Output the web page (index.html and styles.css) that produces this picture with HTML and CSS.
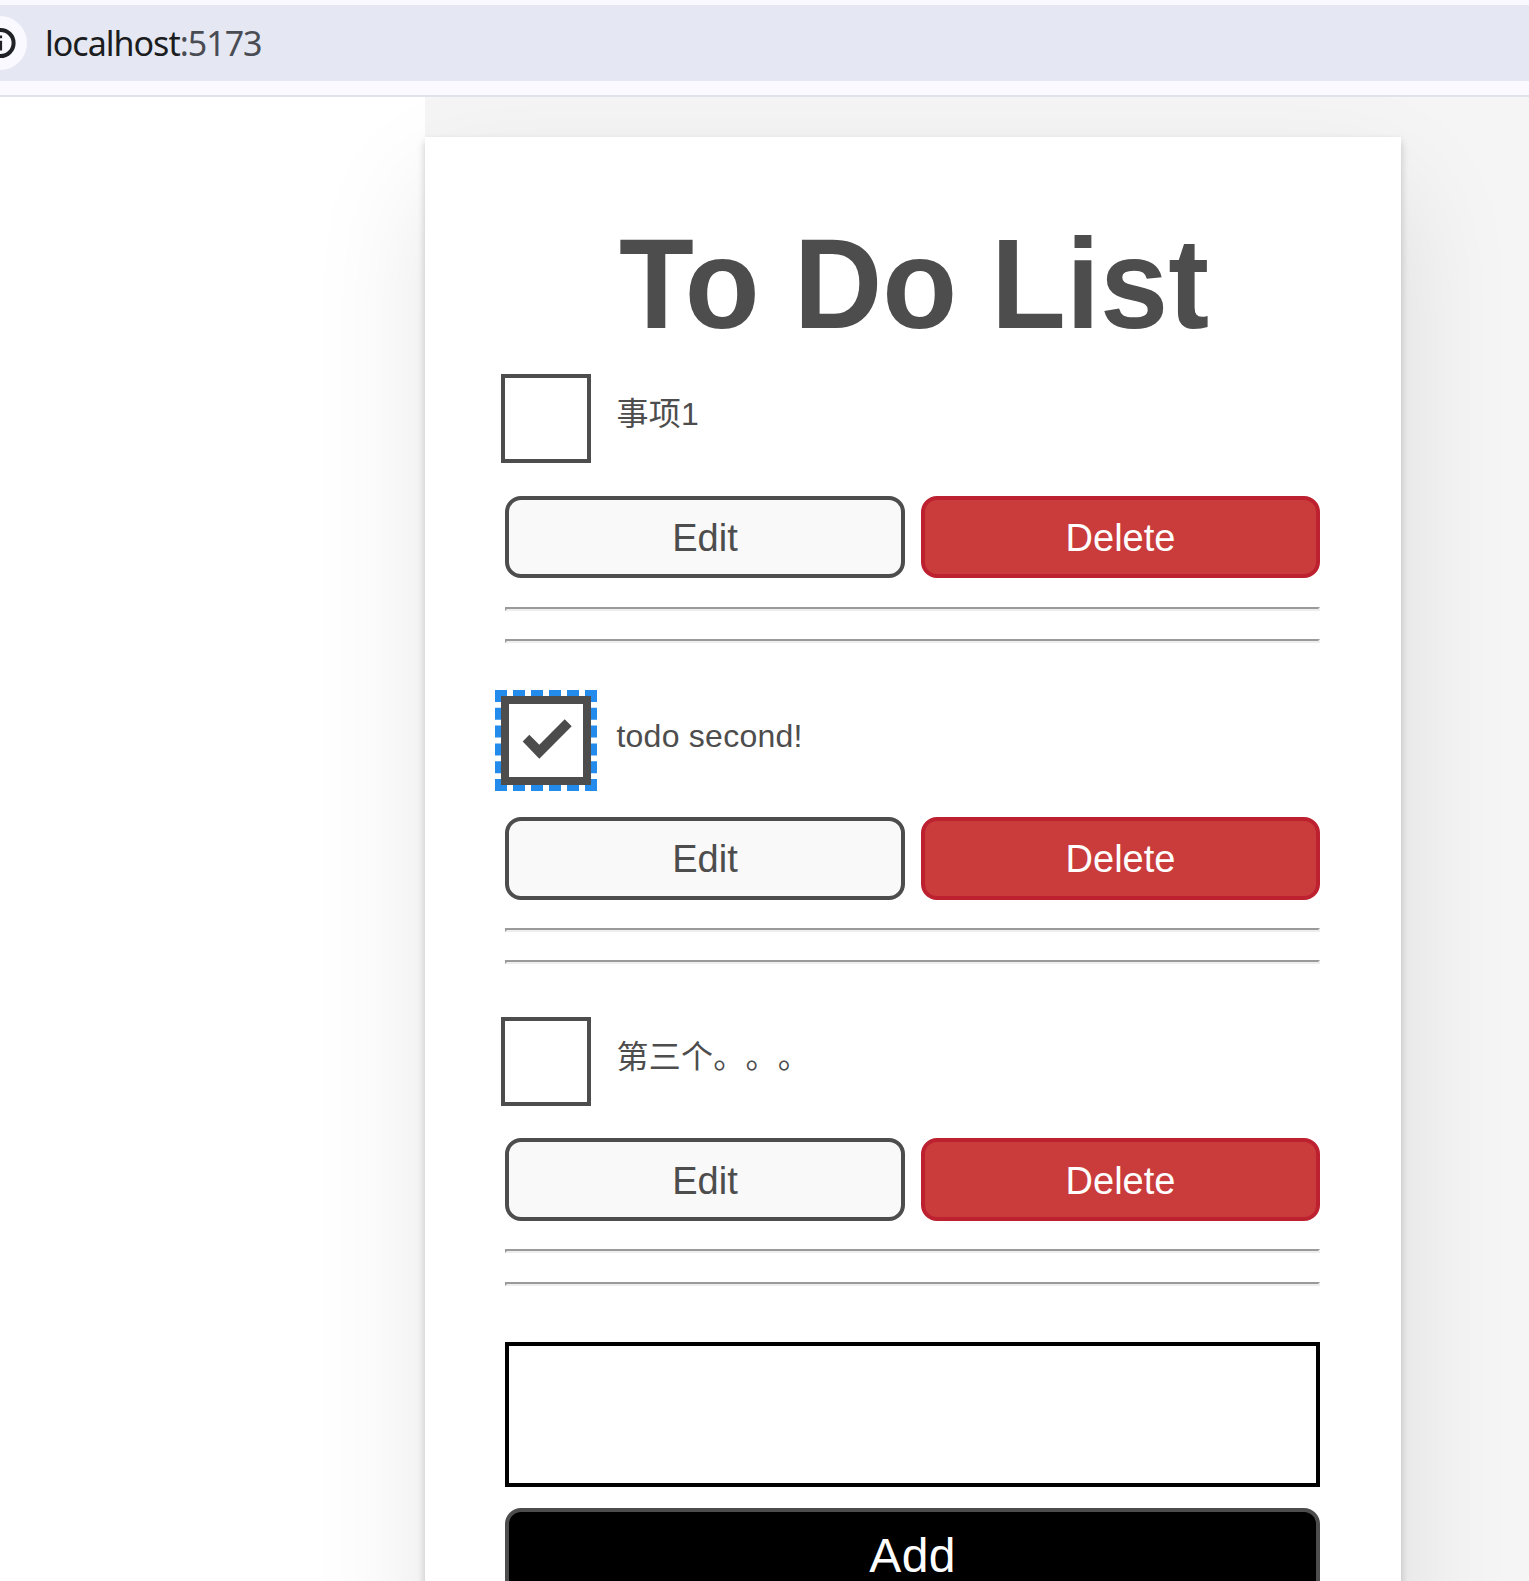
FILE: index.html
```html
<!DOCTYPE html>
<html lang="zh-CN">
<head>
<meta charset="utf-8">
<title>To Do List</title>
<link rel="stylesheet" href="styles.css">
</head>
<body>
<header class="browser-bar">
  <div class="address">
    <svg class="info" width="27" height="54" viewBox="0 0 27 54" aria-hidden="true">
      <circle cx="0" cy="27" r="27" fill="#faf9ff"/>
      <circle cx="0.5" cy="27" r="13.1" fill="none" stroke="#1f2126" stroke-width="4"/>
      <path d="M-1 24.7H2.1V34.5H-1zM-1 19.4H2.1V22.3H-1z" fill="#1f2126"/>
    </svg>
    <span class="url"><span class="host">localhost</span>:5173</span>
  </div>
</header>
<main class="page">
  <div class="gutter"></div>
  <div class="app">
    <section class="card">
      <h1 class="title">To Do List</h1>
      <ul class="todos">
        <li class="todo">
          <div class="row"><span class="box"></span><span class="label">事项1</span></div>
          <div class="buttons"><button class="btn">Edit</button><button class="btn danger">Delete</button></div>
          <hr class="rule"><hr class="rule">
        </li>
        <li class="todo">
          <div class="row">
            <span class="box checked">
              <svg width="50" height="40" viewBox="0 0 50 40" aria-hidden="true"><path d="M.7 22.5 7.3 15.8 17.3 25.8 42.7.2 49.7 7.2 17.3 39.8z" fill="#4c4c4c"/></svg>
            </span>
            <span class="label">todo second!</span>
          </div>
          <div class="buttons"><button class="btn">Edit</button><button class="btn danger">Delete</button></div>
          <hr class="rule"><hr class="rule">
        </li>
        <li class="todo">
          <div class="row"><span class="box"></span><span class="label">第三个。。。</span></div>
          <div class="buttons"><button class="btn">Edit</button><button class="btn danger">Delete</button></div>
          <hr class="rule"><hr class="rule">
        </li>
      </ul>
      <input class="field" type="text" aria-label="New item">
      <button class="btn add">Add</button>
    </section>
  </div>
</main>
</body>
</html>
```
FILE: styles.css
```css
* { box-sizing: border-box; }
html, body { height: 100%; }
body {
  margin: 0;
  display: flex;
  flex-direction: column;
  overflow: hidden;
  background: #fff;
  color: #4d4d4d;
  font-family: "Liberation Sans", Arial, "Noto Sans CJK SC", sans-serif;
}

.browser-bar {
  flex: none;
  height: 97px;
  padding-top: 5px;
  background: #faf9ff;
  border-bottom: 2px solid #e0e3ec;
}
.address {
  display: flex;
  align-items: center;
  height: 76px;
  background: #e5e8f3;
}
.info { flex: none; }
.url {
  margin-left: 18px;
  font: 34px/46px "Noto Sans", sans-serif;
  letter-spacing: -1px;
  color: #4a4c54;
}
.host { color: #1b1c20; }

.page {
  flex: 1;
  min-height: 0;
  display: flex;
  overflow: hidden;
}
.gutter { flex: none; width: 425px; }
.app {
  flex: 1;
  padding-top: 40px;
  background: #f5f5f5;
}
.card {
  width: 976px;
  height: 1600px;
  padding: 80px 81px 0 80px;
  background: #fff;
  box-shadow: 0 4px 8px 0 rgba(0, 0, 0, 0.2), 0 50px 110px 0 rgba(0, 0, 0, 0.1);
}
.title {
  height: 157.1px;
  margin: 0;
  padding-left: 3px;
  font-size: 122.6px;
  line-height: 138px;
  text-align: center;
  white-space: nowrap;
  transform: scaleY(1.04);
  transform-origin: 0 112px;
}

.todos { margin: 0; padding: 0; list-style: none; }
.todo { height: 321.45px; }
.row {
  display: flex;
  align-items: center;
  height: 89px;
  margin: 0 0 32.45px -4px;
}
.box {
  flex: none;
  display: flex;
  align-items: center;
  justify-content: center;
  width: 90px;
  height: 89px;
  border: 4px solid #4d4d4d;
}
.box.checked {
  border-width: 8px;
  outline: 6px dashed #228bec;
}
.box svg { margin: 0 0 3px 1px; }
.label {
  margin: 0 0 8.4px 25.4px;
  font-size: 32px;
  line-height: 40px;
  letter-spacing: 0.26px;
  text-spacing-trim: space-all;
}
.buttons {
  display: grid;
  grid-template-columns: 400px 399px;
  gap: 16px;
  margin-bottom: 28.4px;
}
.btn {
  height: 82.6px;
  padding: 2px 0 0;
  border: 4px solid #4d4d4d;
  border-radius: 16px;
  background: #f9f9f9;
  color: #4d4d4d;
  font: 38px/44px "Liberation Sans", Arial, sans-serif;
}
.btn.danger {
  border-color: #bd2130;
  background: #ca3c3c;
  color: #fff;
}
.rule {
  height: 4px;
  margin: 0 0 28.15px;
  border: 2px solid;
  border-color: #9a9a9a #eee #eee #9a9a9a;
}
.field {
  display: block;
  width: 100%;
  height: 145px;
  margin: 3.5px 0 21px;
  padding: 0 16px;
  border: 4px solid #000;
  border-radius: 0;
  font-size: 48px;
}
.btn.add {
  display: block;
  width: 100%;
  height: 96px;
  padding: 0;
  background: #000;
  color: #fff;
  font-size: 48px;
  letter-spacing: 0.3px;
}
```
